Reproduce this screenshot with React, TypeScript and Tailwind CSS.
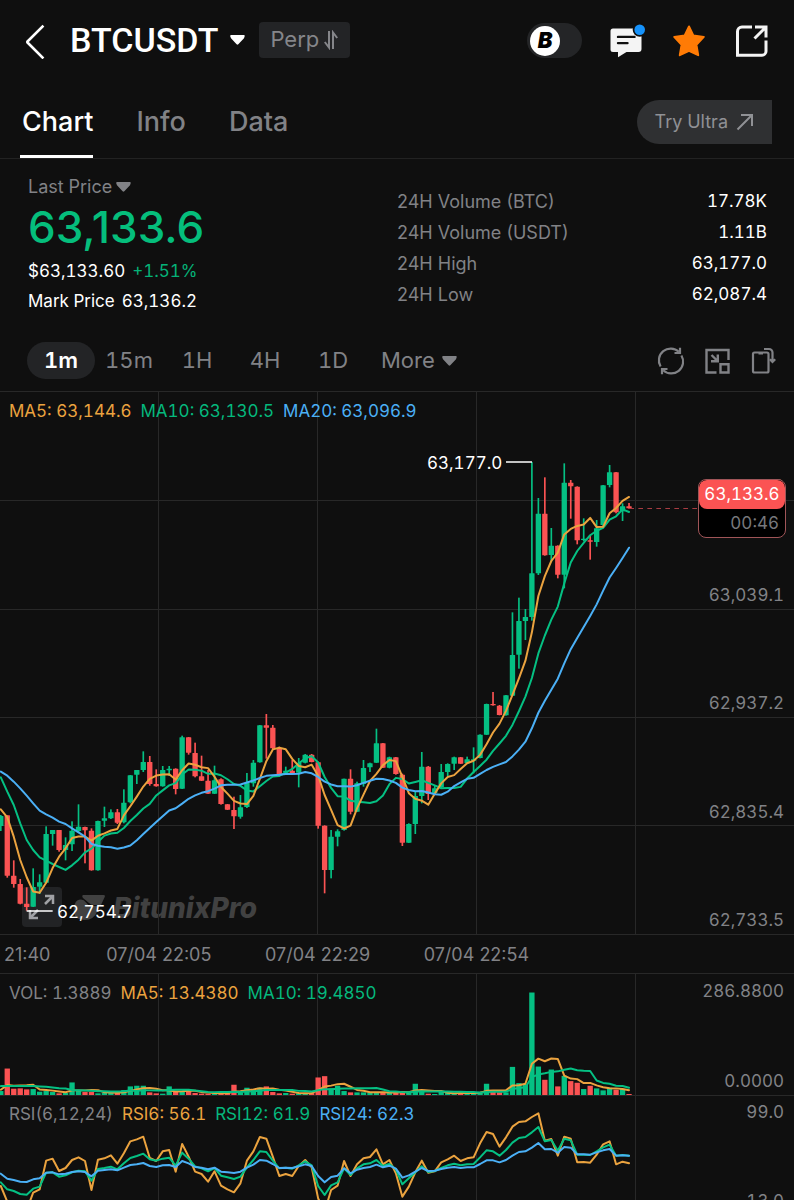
import React from "react";

type Candle = [high: number, top: number, bottom: number, low: number, up: 0 | 1];

/* Chart drawings use three units to one pixel. Candle levels are measured from BASE. */
const BASE = 864;
const STEP = 19.43;
const x = (i: number) => 2.4 + STEP * i;

const candles: Candle[] = [
  [405, 408, 438, 453, 1], [406, 406, 587, 593, 0], [541, 587, 612, 623, 0], [597, 612, 671, 673, 0],
  [622, 671, 681, 692, 0], [565, 621, 680, 681, 1], [583, 607, 620, 642, 1], [439, 462, 608, 610, 1],
  [450, 450, 462, 497, 1], [450, 450, 510, 515, 0], [472, 495, 510, 541, 1], [424, 452, 493, 513, 1],
  [373, 440, 453, 458, 1], [440, 441, 451, 550, 0], [445, 452, 571, 572, 0], [422, 423, 571, 572, 1],
  [380, 415, 422, 441, 1], [388, 397, 415, 417, 1], [387, 397, 428, 432, 0], [328, 368, 427, 430, 1],
  [285, 286, 367, 370, 1], [270, 270, 284, 312, 1], [214, 246, 270, 276, 1], [228, 246, 312, 317, 0],
  [268, 312, 319, 320, 0], [258, 270, 319, 320, 1], [258, 266, 271, 288, 1], [265, 266, 327, 343, 0],
  [167, 172, 326, 327, 1], [171, 172, 218, 224, 0], [188, 219, 289, 292, 0], [227, 289, 302, 303, 0],
  [270, 302, 341, 342, 0], [257, 301, 341, 342, 1], [295, 298, 372, 374, 0], [372, 373, 389, 390, 0],
  [350, 390, 409, 447, 0], [345, 382, 410, 416, 1], [279, 309, 381, 384, 1], [240, 248, 310, 320, 1],
  [135, 136, 247, 248, 1], [102, 136, 143, 236, 0], [135, 143, 205, 207, 0], [200, 206, 284, 290, 0],
  [260, 272, 278, 285, 1], [240, 272, 280, 282, 0], [234, 248, 278, 322, 1], [222, 224, 248, 250, 1],
  [222, 224, 246, 247, 0], [245, 247, 437, 446, 0], [436, 437, 570, 640, 0], [450, 470, 570, 595, 1],
  [448, 454, 470, 499, 1], [296, 296, 450, 452, 1], [268, 296, 395, 403, 0], [305, 310, 395, 396, 1],
  [240, 264, 312, 320, 1], [248, 250, 262, 276, 1], [146, 190, 248, 249, 1], [189, 190, 263, 264, 0],
  [230, 232, 263, 265, 1], [231, 232, 282, 284, 0], [281, 284, 488, 498, 0], [430, 432, 488, 489, 1],
  [335, 348, 432, 462, 1], [216, 260, 348, 370, 1], [258, 260, 342, 360, 0], [318, 325, 340, 345, 1],
  [252, 276, 322, 326, 1], [250, 252, 276, 288, 1], [230, 232, 251, 270, 1], [231, 232, 251, 252, 0],
  [230, 238, 250, 252, 1], [202, 238, 242, 280, 1], [163, 164, 234, 235, 1], [71, 72, 164, 165, 1],
  [36, 72, 76, 77, 0], [75, 77, 105, 106, 0], [45, 46, 106, 107, 1], [-203, -75, 47, 48, 1],
  [-247, -177, -76, -34, 1], [-213, -189, -177, -120, 1], [-654, -320, -189, -178, 1], [-546, -499, -320, -315, 1],
  [-608, -499, -374, -373, 0], [-456, -403, -375, -355, 1], [-404, -403, -316, -305, 0], [-650, -592, -316, -275, 1],
  [-600, -592, -581, -484, 0], [-581, -580, -419, -407, 0], [-485, -424, -420, -417, 1], [-432, -419, -415, -361, 0],
  [-480, -455, -414, -400, 1], [-585, -584, -465, -457, 1], [-645, -623, -585, -578, 1], [-624, -623, -503, -500, 0],
  [-530, -521, -506, -477, 1], [-531, -521, -515, -514, 0],
];

const volumes = [
  12, 80, 19, 20, 17, 18, 10, 12, 9, 5, 6, 38, 12, 9, 9, 5, 7, 8, 6, 15, 26, 28, 28, 8, 5, 4, 26, 11, 10, 12, 6, 4, 4,
  5, 6, 6, 31, 8, 22, 18, 22, 26, 9, 5, 6, 4, 5, 6, 6, 53, 57, 20, 28, 12, 8, 8, 8, 7, 9, 8, 7, 8, 12, 8, 34, 12, 4,
  3, 9, 6, 5, 6, 5, 8, 10, 34, 10, 8, 8, 85, 36, 33, 310, 86, 46, 77, 26, 58, 42, 37, 18, 28, 20, 14, 22, 16, 18, 3,
];

const rsi6 = [
  768, 815, 850, 860, 840, 788, 778, 692, 686, 723, 714, 690, 682, 693, 780, 689, 685, 676, 701, 670, 634, 628, 620,
  684, 693, 664, 660, 725, 642, 680, 725, 732, 755, 724, 767, 778, 787, 760, 692, 664, 621, 626, 680, 738, 732, 738,
  708, 690, 712, 805, 845, 780, 767, 693, 738, 703, 685, 681, 658, 703, 690, 730, 800, 770, 727, 692, 728, 724, 697,
  688, 677, 693, 685, 682, 640, 606, 612, 650, 622, 590, 576, 574, 561, 550, 632, 627, 677, 620, 626, 697, 696, 698,
  674, 643, 634, 703, 695, 700,
];
const rsi12 = [
  757, 778, 783, 792, 794, 776, 770, 728, 727, 740, 736, 727, 722, 724, 752, 717, 714, 710, 718, 700, 684, 678, 671,
  688, 692, 686, 683, 707, 668, 686, 709, 715, 724, 714, 737, 742, 747, 740, 712, 690, 664, 666, 692, 715, 713, 716,
  706, 694, 706, 768, 795, 766, 757, 715, 735, 715, 703, 700, 690, 708, 702, 718, 763, 745, 727, 709, 726, 723, 714,
  706, 701, 706, 703, 702, 682, 661, 664, 677, 660, 638, 624, 621, 607, 591, 634, 630, 662, 626, 631, 674, 674, 675,
  664, 652, 644, 677, 675, 677,
];
const rsi24 = [
  731, 746, 750, 755, 756, 748, 745, 728, 727, 733, 731, 726, 724, 726, 739, 722, 720, 718, 721, 713, 705, 703, 699,
  708, 711, 706, 705, 711, 693, 700, 711, 713, 718, 713, 725, 727, 729, 725, 713, 704, 690, 692, 702, 714, 713, 714,
  709, 703, 708, 738, 757, 741, 737, 715, 730, 719, 714, 711, 704, 712, 707, 716, 743, 736, 725, 714, 723, 722, 717,
  713, 711, 714, 712, 712, 702, 691, 691, 697, 690, 677, 666, 664, 653, 639, 658, 657, 668, 651, 653, 673, 673, 674,
  667, 661, 657, 677, 676, 677,
];

const closes = candles.map((c) => (c[4] ? c[1] : c[2]));

/* Moving average; `lead` holds the values that depend on data before the first item. */
function average(data: number[], span: number, lead: number[]) {
  return data.map((_, i) =>
    i < lead.length ? lead[i] : data.slice(i - span + 1, i + 1).reduce((a, b) => a + b, 0) / span,
  );
}
const points = (data: number[], y: (v: number) => number) => data.map((v, i) => `${x(i)},${y(v)}`).join(" ");

const ma5 = average(closes, 5, [388, 412, 470, 540]);
const ma10 = average(closes, 10, [292, 335, 375, 430, 480, 510, 532, 542, 552]);
const ma20 = average(closes, 20, [
  275, 287, 305, 325, 347, 370, 392, 403, 413, 425, 432, 445, 457, 470, 492, 497, 500, 502, 506,
]);
const vol5 = average(volumes, 5, [16, 30, 28, 29]);
const vol10 = average(volumes, 10, [27, 27, 27, 27, 27, 27, 26, 25, 23]);

const GREEN = "#05c083";
const RED = "#fb5353";
const ORANGE = "#eba33f";
const BLUE = "#4bb0f6";
const GRID = "#282828";

function Line({ pts, color }: { pts: string; color: string }) {
  return <polyline points={pts} fill="none" stroke={color} strokeWidth="6" strokeLinejoin="round" strokeLinecap="round" />;
}

function Verticals({ height }: { height: number }) {
  return (
    <g stroke={GRID} strokeWidth="3">
      {[475.5, 952.5, 1429.5, 1906.5].map((v) => (
        <line key={v} x1={v} x2={v} y1="0" y2={height} />
      ))}
    </g>
  );
}

function Caret({ className }: { className: string }) {
  return (
    <svg viewBox="0 0 15 10" className={className} fill="currentColor" aria-hidden="true">
      <path d="M1.2 0h12.6c.7 0 1.1.8.8 1.4L14 3.2 8.3 9.300a1.200 1.200 0 0 1-1.700 0L1 3.200.3 1.400C0 .8.5 0 1.200 0Z" />
    </svg>
  );
}

function Header() {
  return (
    <header className="flex h-[79px] items-center px-[26px]">
      <button aria-label="Back" className="-ml-0.5 mr-[23px] flex pt-0.5 text-white">
        <svg viewBox="0 0 23 36" className="h-9 w-[23px]" fill="none" stroke="currentColor" strokeWidth="2.600" strokeLinecap="square" strokeLinejoin="bevel">
          <path d="M18.500 3.500 3 19 18.500 34.500" />
        </svg>
      </button>
      <button className="flex items-center gap-3 text-[34px] leading-10 font-medium text-white">
        <span className="font-[Roboto,sans-serif]">BTCUSDT</span>
        <Caret className="h-2.5 w-[15px]" />
      </button>
      <button className="ml-3.5 flex h-9 items-center gap-1 rounded bg-[#232426] px-[11px] text-[22px] text-[#85868a]">
        Perp
        <svg viewBox="0 0 16 20" className="h-5 w-4" fill="none" stroke="currentColor" strokeWidth="2" aria-hidden="true">
          <path d="M6 1v16.500L1.800 12M10 19V2.500L14.200 8" />
        </svg>
      </button>
      <div className="ml-auto flex items-center pt-0.5">
        <button role="switch" aria-checked="false" aria-label="B mode" className="flex h-[35px] w-[55px] items-center rounded-full bg-[#242527] pl-[3px]">
          <span className="flex size-[30px] items-center justify-center rounded-full bg-white text-[22px] font-black italic text-black">B</span>
        </button>
        <button aria-label="Messages" className="ml-7 flex">
          <svg viewBox="0 0 36 36" className="size-9">
            <path d="M3 5.500h25.500a3 3 0 0 1 3 3V26a3 3 0 0 1-3 3H16.500L8 34.200V29H3a2.500 2.500 0 0 1-2.500-2.500V8A2.500 2.500 0 0 1 3 5.500Z" fill="#f4f4f4" />
            <path d="M8 13.900h16.500M8 20.100h9.500" stroke="#0f0f0f" strokeWidth="2.400" strokeLinecap="round" />
            <circle cx="29.700" cy="6.700" r="7" fill="#0f0f0f" />
            <circle cx="29.700" cy="6.700" r="5.300" fill="#1592fb" />
          </svg>
        </button>
        <button aria-label="Remove from favourites" className="ml-[26px] flex text-[#ff7b05]">
          <svg viewBox="0 0 34 34" className="size-[34px]" fill="currentColor" stroke="currentColor" strokeWidth="2" strokeLinejoin="round">
            <path d="M17 2.500 21.300 11.500l10.500 1.400-7.400 7.800 1.800 10.500-9.200-4.400-9.200 4.400 1.800-10.500-7.400-7.800 10.500-1.400Z" />
          </svg>
        </button>
        <button aria-label="Open" className="ml-7 flex text-[#f4f4f4]">
          <svg viewBox="0 0 34 34" className="size-[34px]" fill="none" stroke="currentColor" strokeWidth="3">
            <path d="M18 3H8a4.500 4.500 0 0 0-4.500 4.500V31.200H28a4 4 0 0 0 4-4V16.500" />
            <path d="M21 3h11v10.500M31.500 3.500 20.500 14.500" />
          </svg>
        </button>
      </div>
    </header>
  );
}

function Tabs() {
  return (
    <nav className="flex h-20 items-stretch border-b border-[#222] pl-5 pr-[22px] text-[27px] font-medium text-[#818286]">
      <a href="#chart" aria-current="page" className="flex items-center border-b-[3px] border-white pt-2.5 pl-[2px] text-white">Chart</a>
      <a href="#info" className="ml-[43px] flex items-center pt-[7px]">Info</a>
      <a href="#data" className="ml-[43px] flex items-center pt-[7px]">Data</a>
      <button className="mt-[21px] ml-auto flex h-11 items-center gap-2 rounded-l-full bg-[#2f3032] px-[18px] text-lg font-normal text-[#909195]">
        Try Ultra
        <svg viewBox="0 0 18 18" className="size-[18px]" fill="none" stroke="currentColor" strokeWidth="2" aria-hidden="true">
          <path d="M5 2h11v11M16 2 1.500 16.500" />
        </svg>
      </button>
    </nav>
  );
}

const stats = [
  ["24H Volume (BTC)", "17.78K"],
  ["24H Volume (USDT)", "1.11B"],
  ["24H High", "63,177.0"],
  ["24H Low", "62,087.4"],
];

function Summary() {
  return (
    <section className="grid grid-cols-2 pt-3 text-[17px] text-white">
      <div className="flex flex-col items-start pl-7">
        <button className="flex items-center gap-1 text-lg leading-8 text-[#818286]">
          Last Price
          <Caret className="h-2.5 w-[15px]" />
        </button>
        <p className="mb-[5px] text-[44px] leading-[48px] font-medium text-[#05be7c] proportional-nums">63,133.6</p>
        <p className="flex gap-[7px] leading-[30px]">
          $63,133.60 <span className="text-[#05b278]">+1.51%</span>
        </p>
        <p className="flex gap-[7px] leading-[31px]">
          <span>Mark Price</span>
          <span>63,136.2</span>
        </p>
      </div>
      <dl className="pt-[15px] pr-[27px] leading-[31px]">
        {stats.map(([k, v]) => (
          <div key={k} className="flex justify-between">
            <dt className="text-lg leading-[31px] text-[#818286] proportional-nums">{k}</dt>
            <dd>{v}</dd>
          </div>
        ))}
      </dl>
    </section>
  );
}

function Intervals() {
  return (
    <div className="flex items-center pt-[25px] pr-4 pb-3 pl-[27px] text-[22px] text-[#818286]">
      <button aria-pressed="true" className="h-[37px] w-[68px] rounded-full bg-[#232426] font-semibold text-white">1m</button>
      {["15m", "1H", "4H", "1D"].map((t) => (
        <button key={t} aria-pressed="false" className="h-[37px] w-[68px]">{t}</button>
      ))}
      <button className="ml-3.5 flex items-center gap-[7px]">
        More
        <Caret className="h-2.5 w-[15px]" />
      </button>
      <div className="ml-auto flex items-center gap-4">
        <button aria-label="Refresh" className="flex">
          <svg viewBox="0 0 30 30" className="size-[30px]" fill="none" stroke="currentColor" strokeWidth="2.200">
            <path d="M4.600 20.500A11.800 11.800 0 0 1 22.800 5.800M25.400 9.500A11.800 11.800 0 0 1 7.200 24.200" />
            <path d="M24 1.800V7h-5.500M6 28.200V23h5.500" />
          </svg>
        </button>
        <button aria-label="Minimise" className="flex">
          <svg viewBox="0 0 30 30" className="size-[30px]" fill="none" stroke="currentColor" strokeWidth="2.400">
            <path d="M26.500 14V4h-22v22.500h10" />
            <path d="M18.500 18.300h8v8.200h-8Z" />
            <path d="M9.500 9l6 6M15.800 8.500v6.800H9" />
          </svg>
        </button>
        <button aria-label="Rotate" className="flex">
          <svg viewBox="0 0 30 30" className="size-[30px]" fill="none" stroke="currentColor" strokeWidth="2.200">
            <rect x="5" y="6.500" width="15.500" height="20" rx="1.500" />
            <path d="M10.500 7.500h4.500M16 3h5a3.500 3.500 0 0 1 3.500 3.500V15M21.800 13.300l2.700 2.700 2.700-2.700" />
          </svg>
        </button>
      </div>
    </div>
  );
}

function PriceChart() {
  return (
    <section aria-label="Price" className="relative h-[542px]">
      <div className="absolute bottom-[10px] left-[73px] flex items-center gap-2 text-[#414141]" aria-hidden="true">
        <svg viewBox="0 0 32 28" className="h-7 w-8" fill="currentColor">
          <path d="M10 1h20.500q2 0 1.200 2L28 11h-7q-3 0-5-2l-6-5q-1.500-2 0-3Z" />
          <path d="M2 9.500Q3.500 5.500 8 5.500q3 0 5 3t5 3.500h8L24.500 17q-3.500 9-13 9T1 18.500Q0 13 2 9.500Z" />
        </svg>
        <span className="text-[28px] leading-8 font-extrabold italic">BitunixPro</span>
      </div>
      <button aria-label="Full screen" className="absolute bottom-[7px] left-[22px] flex size-10 items-center justify-center rounded bg-[#222325] text-[#a0a1a5]">
        <svg viewBox="0 0 40 40" className="size-10" fill="none" stroke="currentColor" strokeWidth="2.500">
          <path d="M23 9h8v8M31 9l-8 8M16 31H8v-8M8 31l8-8" />
        </svg>
      </button>
      <svg viewBox="0 0 2382 1626" preserveAspectRatio="none" className="absolute inset-0 size-full" aria-hidden="true">
        <Verticals height={1626} />
        <g stroke={GRID} strokeWidth="3">
          {[325.5, 652.5, 976.5, 1300.5].map((v) => (
            <line key={v} x1="0" x2="2382" y1={v} y2={v} />
          ))}
        </g>
        {candles.map(([high, top, bottom, low, up], i) => (
          <g key={i} fill={up ? GREEN : RED}>
            <rect x={x(i) - 2.5} y={BASE + high} width="5" height={low - high} />
            <rect x={x(i) - 8} y={BASE + top} width="16" height={Math.max(3, bottom - top)} rx="1" />
          </g>
        ))}
        <Line color={GREEN} pts={points(ma10, (v) => BASE + v)} />
        <Line color={ORANGE} pts={points(ma5, (v) => BASE + v)} />
        <Line color={BLUE} pts={points(ma20, (v) => BASE + v)} />
        <line x1="1888" x2="2094" y1="349.500" y2="349.500" stroke="#a83c42" strokeWidth="3" strokeDasharray="14 13" />
        <path d="M1518 210H1596M80 1557H158" stroke="#fff" strokeWidth="5" />
      </svg>
      <p className="relative flex gap-[9px] pt-[7px] pl-[9px] text-[17px] leading-6">
        <span className="text-[#eba33f]">MA5: 63,144.6</span>
        <span className="text-[#05b87d]">MA10: 63,130.5</span>
        <span className="text-[#4bb0f6]">MA20: 63,096.9</span>
      </p>
      <span className="absolute top-[59px] left-[427px] text-[17px] leading-6 text-white">63,177.0</span>
      <span className="absolute bottom-[10px] left-[57px] text-[17px] leading-6 text-white">62,754.7</span>
      <ul className="absolute inset-y-0 right-[10px] flex flex-col text-right text-[17px] leading-6 text-[#818286]">
        {["63,140.9", "63,039.1", "62,937.2", "62,835.4", "62,733.5"].map((p) => (
          <li key={p} className="flex flex-1 items-end justify-end pb-0.5">{p}</li>
        ))}
      </ul>
      <div className="absolute top-[87px] right-2 w-[88px] overflow-hidden rounded-lg border border-[#a05558] bg-black text-center text-[17px] text-white">
        <p className="rounded-lg bg-[#fb5353] leading-[29px]">63,133.6</p>
        <p className="pr-1.5 text-right leading-7 text-[#77787c]">00:46</p>
      </div>
    </section>
  );
}

function TimeAxis() {
  return (
    <div className="flex h-10 items-center border-y border-[#282828] pt-0.5 text-lg text-[#818286] proportional-nums">
      <span className="w-[10%] pl-1">21:40</span>
      {["07/04 22:05", "07/04 22:29", "07/04 22:54"].map((t) => (
        <span key={t} className="w-[20%] text-center">{t}</span>
      ))}
    </div>
  );
}

function VolumeChart() {
  return (
    <section aria-label="Volume" className="relative flex h-[122px] justify-between border-b border-[#282828] pr-[10px] pl-[9px]">
      <svg viewBox="0 0 2382 366" preserveAspectRatio="none" className="absolute inset-0 size-full" aria-hidden="true">
        <Verticals height={366} />
        {volumes.map((v, i) => (
          <rect key={i} x={x(i) - 8} y={366 - v} width="16" height={v} fill={candles[i][4] ? GREEN : RED} />
        ))}
        <Line color={ORANGE} pts={points(vol5, (v) => 366 - v)} />
        <Line color={GREEN} pts={points(vol10, (v) => 366 - v)} />
      </svg>
      <p className="relative flex gap-[9px] pt-[7px] text-[17px] leading-6">
        <span className="text-[#818286]">VOL: 1.3889</span>
        <span className="text-[#eba33f]">MA5: 13.4380</span>
        <span className="text-[#05b87d]">MA10: 19.4850</span>
      </p>
      <div className="relative flex flex-col justify-between pt-[5px] pb-0.5 text-right text-[17px] leading-6 text-[#818286]">
        <span>286.8800</span>
        <span>0.0000</span>
      </div>
    </section>
  );
}

function RsiChart() {
  return (
    <section aria-label="RSI" className="relative flex h-[104px] justify-between overflow-hidden pr-[10px] pl-[9px]">
      <svg viewBox="0 498 2382 312" preserveAspectRatio="none" className="absolute inset-0 size-full" aria-hidden="true">
        <g transform="translate(0 498)">
          <Verticals height={312} />
        </g>
        <Line color={ORANGE} pts={points(rsi6, (v) => v)} />
        <Line color={GREEN} pts={points(rsi12, (v) => v)} />
        <Line color={BLUE} pts={points(rsi24, (v) => v)} />
      </svg>
      <p className="relative flex gap-[9px] pt-1.5 text-[17px] leading-6">
        <span className="text-[#818286]">RSI(6,12,24)</span>
        <span className="text-[#eba33f]">RSI6: 56.1</span>
        <span className="text-[#05b87d]">RSI12: 61.9</span>
        <span className="text-[#4bb0f6]">RSI24: 62.3</span>
      </p>
      <div className="relative flex flex-col gap-[65px] pt-1 text-right text-[17px] leading-6 text-[#818286]">
        <span>99.0</span>
        <span>13.0</span>
      </div>
    </section>
  );
}

export default function App() {
  return (
    <main className="min-h-screen bg-[#0f0f0f] font-[Inter,sans-serif] tabular-nums">
      <Header />
      <Tabs />
      <Summary />
      <Intervals />
      <div className="border-t border-[#282828]">
        <PriceChart />
        <TimeAxis />
        <VolumeChart />
        <RsiChart />
      </div>
    </main>
  );
}
